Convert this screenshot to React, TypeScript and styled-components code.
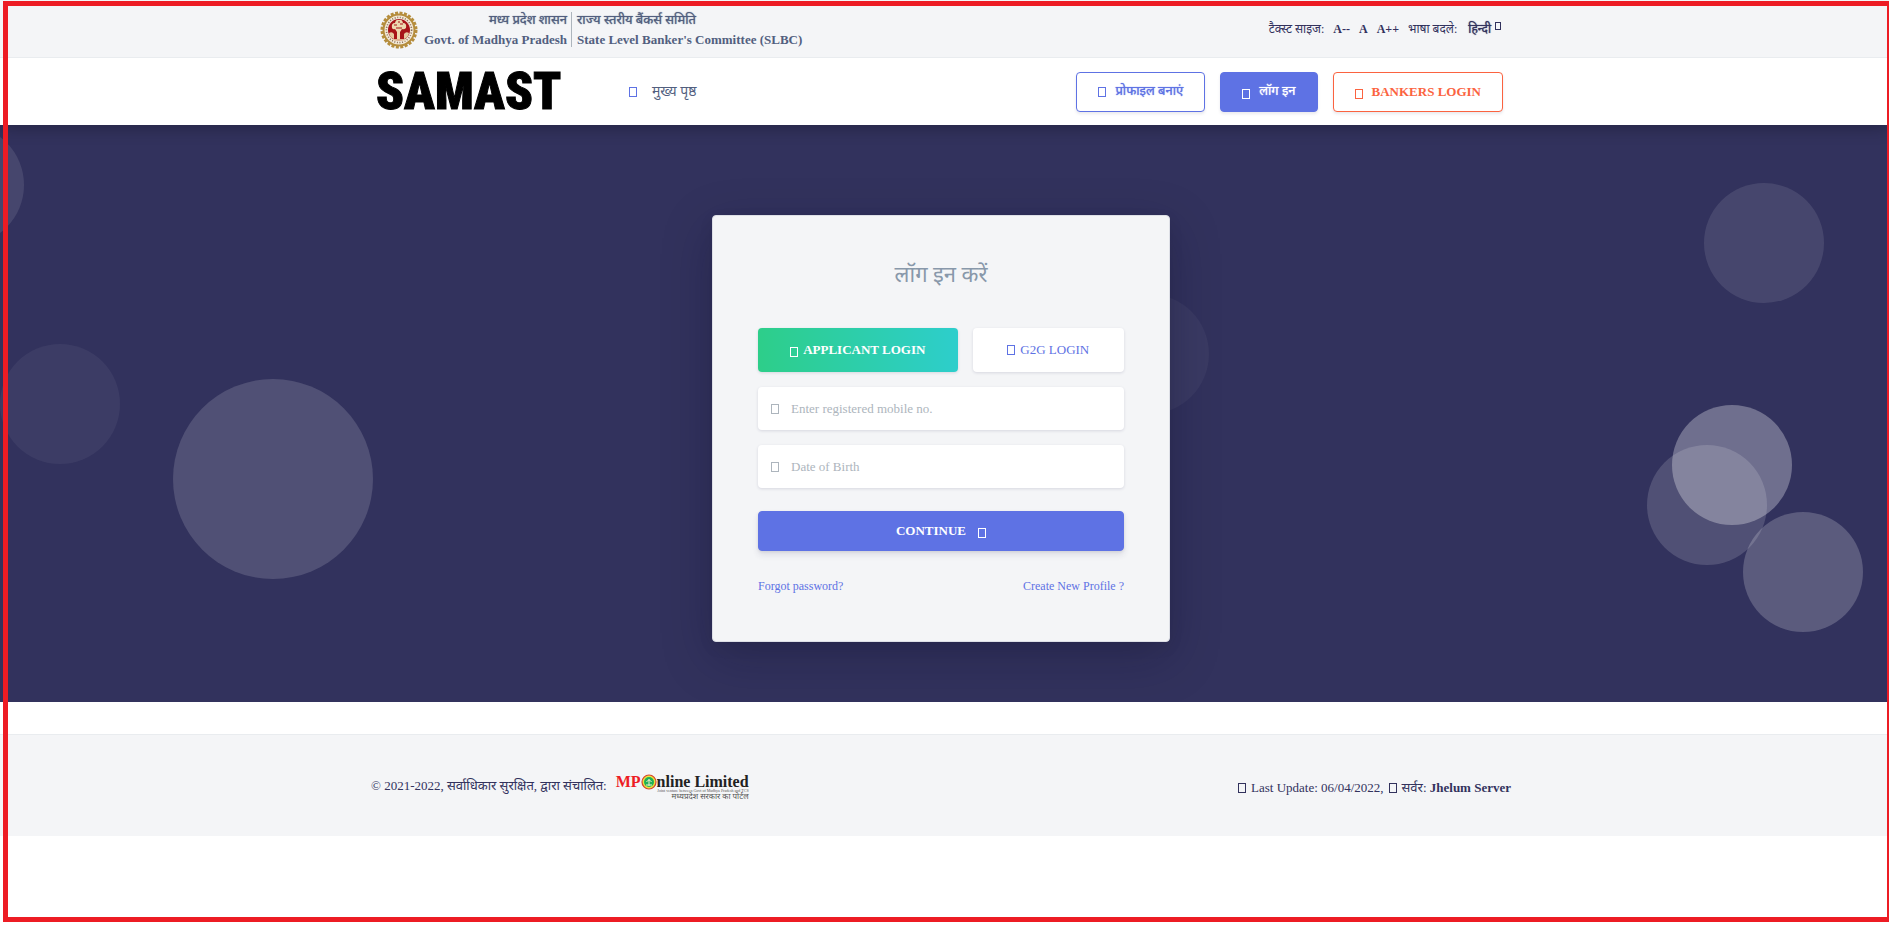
import React from "react";
import styled, { createGlobalStyle } from "styled-components";

const INDIGO = "#5e72e4";
const ORANGE = "#fb6340";
const NAVY = "#32325d";
const SLATE = "#525f7f";

const GlobalStyle = createGlobalStyle`
  * { box-sizing: border-box; }
  body {
    margin: 0;
    background: #fff;
    color: ${NAVY};
    font-family: "Liberation Serif", "Noto Sans Devanagari", "Noto Sans", serif;
    font-size: 13px;
    line-height: 20px;
    overflow-x: hidden;
  }
  button, input { font-family: inherit; }
  a { text-decoration: none; color: inherit; }
`;

const Frame = styled.div`
  position: fixed;
  inset: 1px -3px 3px 3px;
  border: 5px solid #ed1c24;
  pointer-events: none;
  z-index: 10;
`;

const Container = styled.div`
  display: flex;
  align-items: center;
  justify-content: space-between;
  width: 100%;
  max-width: 1140px;
  margin: 0 auto;
`;

const TopBar = styled.div`
  position: relative;
  z-index: 3;
  display: flex;
  height: 58px;
  padding-right: 7px;
  background: #f4f5f7;
  border-bottom: 1px solid #e9ecef;
`;

const Brand = styled.div`
  display: flex;
  align-items: center;
  padding: 2px 0 0 9px;
`;

const Office = styled.div<{ $first?: boolean }>`
  display: flex;
  flex-direction: column;
  font-size: 13px;
  font-weight: 700;
  line-height: 20px;
  color: ${SLATE};
  white-space: nowrap;
  text-align: ${(p) => (p.$first ? "right" : "left")};
  padding: ${(p) => (p.$first ? "0 4px 0 6px" : "0 0 0 5px")};
`;

/* Devanagari text emboldened by a soft halo instead of the wider bold face */
const Hindi = styled.span`
  font-weight: 400;
  text-shadow: 0 0 1px currentColor;
`;

const Divider = styled.span`
  width: 1px;
  height: 35px;
  background: #adb5bd;
`;

const Tools = styled.div`
  display: flex;
  align-items: center;
  gap: 9px;
  padding-right: 10px;
  font-size: 12px;
  white-space: nowrap;
`;

const ToolButton = styled.button`
  padding: 0;
  border: 0;
  background: none;
  color: ${NAVY};
  font-size: 12px;
  font-weight: 700;
  line-height: 20px;
  cursor: pointer;
`;

const Glyph = styled.span<{ $small?: boolean; $low?: boolean }>`
  display: inline-block;
  flex: none;
  width: ${(p) => (p.$small ? 6 : 8)}px;
  height: ${(p) => (p.$small ? 8 : 10)}px;
  margin-top: ${(p) => (p.$low ? 4 : 0)}px;
  border: 1px solid currentColor;
`;

const Language = styled(ToolButton)`
  display: flex;
  gap: 4px;
  padding-left: 2px;

  ${Glyph} { margin-top: 3px; }
`;

const Header = styled.header`
  position: relative;
  z-index: 2;
  display: flex;
  height: 67px;
  padding-right: 7px;
  background: #fff;
  box-shadow: 0 2px 16px rgba(0, 0, 0, 0.3);
`;

const Nav = styled.nav`
  display: flex;
  align-items: center;
  gap: 67px;
  padding-left: 5px;
`;

const Logo = styled.a`
  width: 186px;
  color: #000;
  font-family: "Roboto Condensed", Roboto, sans-serif;
  font-size: 51px;
  font-weight: 900;
  line-height: 56px;
  -webkit-text-stroke: 1px #000;
`;

const NavLink = styled.a`
  display: flex;
  align-items: center;
  gap: 15px;
  font-size: 14px;
  color: ${SLATE};

  ${Glyph} { color: ${INDIGO}; }
`;

const Actions = styled.div`
  display: flex;
  gap: 15px;
  padding-right: 8px;
`;

const Button = styled.button<{ $tone?: string; $filled?: boolean; $wide?: boolean }>`
  display: flex;
  align-items: center;
  justify-content: center;
  gap: ${(p) => (p.$wide ? 12 : 9)}px;
  height: 40px;
  width: ${(p) => (p.$wide ? "100%" : "auto")};
  padding: 0 21px;
  border: 1px solid ${(p) => p.$tone || INDIGO};
  border-radius: 4px;
  background: ${(p) => (p.$filled ? INDIGO : "#fff")};
  color: ${(p) => (p.$filled ? "#fff" : p.$tone || INDIGO)};
  box-shadow: ${(p) =>
    p.$wide
      ? "0 4px 6px rgba(50, 50, 93, 0.11), 0 1px 3px rgba(0, 0, 0, 0.08)"
      : "0 2px 3px rgba(50, 50, 93, 0.1)"};
  font-size: 13px;
  font-weight: 700;
  white-space: nowrap;
  cursor: pointer;
`;

const Hero = styled.main`
  position: relative;
  display: flex;
  justify-content: center;
  padding: 90px 7px 60px 0;
  background: #32325d;
  overflow: hidden;
`;

const Bubble = styled.span<{ $x: string; $y: string; $alpha: number; $size?: number; $left?: boolean }>`
  position: absolute;
  ${(p) => (p.$left ? "left" : "right")}: ${(p) => p.$x};
  top: ${(p) => p.$y};
  width: ${(p) => p.$size || 120}px;
  height: ${(p) => p.$size || 120}px;
  border-radius: 50%;
  background: rgba(255, 255, 255, ${(p) => p.$alpha});
`;

const Card = styled.form`
  position: relative;
  display: flex;
  flex-direction: column;
  width: 458px;
  padding: 41px 45px 45px;
  border: 1px solid #dddfe6;
  border-radius: 4px;
  background: #f4f5f7;
  box-shadow: 0 15px 50px rgba(10, 10, 40, 0.25), 0 5px 15px rgba(0, 0, 0, 0.07);
`;

const Title = styled.h1`
  margin: 0 0 35px;
  color: #8898aa;
  font-size: 22px;
  font-weight: 400;
  line-height: 36px;
  text-align: center;
`;

const Tabs = styled.div`
  display: flex;
  gap: 15px;
  margin-bottom: 15px;
`;

const Tab = styled.button<{ $active?: boolean }>`
  display: flex;
  align-items: center;
  justify-content: center;
  gap: 5px;
  flex: ${(p) => (p.$active ? "199 1 0" : "151 1 0")};
  height: 44px;
  padding: 0;
  border: 0;
  border-radius: 4px;
  background: ${(p) => (p.$active ? "linear-gradient(87deg, #2dce89, #2dcecc)" : "#fff")};
  color: ${(p) => (p.$active ? "#fff" : INDIGO)};
  box-shadow: 0 1px 3px rgba(50, 50, 93, 0.15);
  font-size: 13px;
  font-weight: ${(p) => (p.$active ? 700 : 400)};
  cursor: pointer;
`;

const Field = styled.label`
  display: flex;
  align-items: center;
  gap: 12px;
  height: 43px;
  margin-bottom: 15px;
  padding: 0 13px;
  border-radius: 4px;
  background: #fff;
  color: #adb5bd;
  box-shadow: 0 1px 3px rgba(50, 50, 93, 0.15);
`;

const Input = styled.input`
  flex: 1;
  min-width: 0;
  padding: 0;
  border: 0;
  outline: 0;
  background: none;
  color: #8898aa;
  font-size: 13px;
  line-height: 20px;

  &::placeholder { color: #adb5bd; opacity: 1; }
`;

const Submit = styled.div`
  padding: 8px 0 25px;
`;

const Links = styled.div`
  display: flex;
  justify-content: space-between;
  color: ${INDIGO};
  font-size: 12px;
  line-height: 20px;
`;

const Footer = styled.footer`
  display: flex;
  margin-top: 32px;
  padding: 34px 7px 34px 0;
  background: #f4f5f7;
  border-top: 1px solid #e9ecef;
`;

const Copyright = styled.div`
  display: flex;
  align-items: center;
  gap: 9px;
`;

const Partner = styled.a`
  display: flex;
  flex-direction: column;
  align-items: flex-end;
  padding-top: 5px;
  color: #222;
`;

const PartnerName = styled.span`
  display: flex;
  align-items: center;
  font-size: 16px;
  font-weight: 700;
  line-height: 16px;
`;

const Red = styled.span`
  color: #ed1c24;
`;

const PartnerNote = styled.span<{ $tiny?: boolean }>`
  font-size: ${(p) => (p.$tiny ? 4 : 8)}px;
  line-height: ${(p) => (p.$tiny ? 2 : 10)}px;
  color: #555;
`;

const Status = styled.div`
  display: flex;
  align-items: center;
  gap: 5px;
  padding-top: 4px;
`;

const Emblem = () => (
  <svg width="38" height="38" viewBox="0 0 38 38" role="img" aria-label="Madhya Pradesh emblem">
    <circle cx="19" cy="19" r="17" fill="none" stroke="#b58d3d" strokeWidth="3" strokeDasharray="3 1.45" />
    <circle cx="19" cy="19" r="15.5" fill="#f3ead9" stroke="#b58d3d" strokeWidth="2" />
    <circle cx="19" cy="19" r="12.6" fill="none" stroke="#8d6f58" strokeWidth="1.6" strokeDasharray="1 1.6" />
    <circle cx="19" cy="19" r="11" fill="#a71318" />
    <path d="M12 17q-1-5 3-5 1-4 4-3 3-1 4 3 4 0 3 5-2 2-4 1l-2 3v7h-3v-7l-2-3q-2 1-3-1z" fill="#ecd9b0" />
    <path d="M9 22q3-2 5 1v5q-4-1-5-6zM29 22q-3-2-5 1v5q4-1 5-6z" fill="#e5c9a0" />
    <path d="M14 14h3M20 13h3M16 17h6M18 11h2" stroke="#a71318" />
    <path d="M13 29h12" stroke="#ecd9b0" strokeWidth="1.6" />
  </svg>
);

const Seal = () => (
  <svg width="16" height="16" viewBox="0 0 16 16" aria-hidden="true">
    <circle cx="8" cy="8" r="7" fill="#e9e23c" stroke="#d5442b" strokeWidth="1.2" />
    <circle cx="8" cy="8" r="5" fill="#1fb058" />
    <path d="M8 5v7M5.500 8q2.500-4 5 0M5 11h6" stroke="#f4f0c8" fill="none" />
  </svg>
);

const bubbles = [
  { x: "-96px", y: "0", alpha: 0.1, left: true },
  { x: "65px", y: "58px", alpha: 0.1 },
  { x: "97px", y: "280px", alpha: 0.3 },
  { x: "122px", y: "320px", alpha: 0.15 },
  { x: "0", y: "219px", alpha: 0.05, left: true },
  { x: "173px", y: "254px", alpha: 0.15, size: 200, left: true },
  { x: "36%", y: "169px", alpha: 0.04 },
  { x: "26px", y: "387px", alpha: 0.2 },
];

export default function App() {
  return (
    <>
      <GlobalStyle />
      <Frame />
      <TopBar>
        <Container>
          <Brand>
            <Emblem />
            <Office $first>
              <Hindi>मध्य प्रदेश शासन</Hindi>
              <span>Govt. of Madhya Pradesh</span>
            </Office>
            <Divider />
            <Office>
              <Hindi>राज्य स्तरीय बैंकर्स समिति</Hindi>
              <span>State Level Banker's Committee (SLBC)</span>
            </Office>
          </Brand>
          <Tools>
            <span>टैक्स्ट साइज:</span>
            <ToolButton type="button">A--</ToolButton>
            <ToolButton type="button">A</ToolButton>
            <ToolButton type="button">A++</ToolButton>
            <span>भाषा बदले:</span>
            <Language type="button">
              <Hindi>हिन्दी</Hindi>
              <Glyph $small />
            </Language>
          </Tools>
        </Container>
      </TopBar>

      <Header>
        <Container>
          <Nav>
            <Logo href="#">SAMAST</Logo>
            <NavLink href="#">
              <Glyph />
              मुख्य पृष्ठ
            </NavLink>
          </Nav>
          <Actions>
            <Button type="button">
              <Glyph />
              <Hindi>प्रोफाइल बनाएं</Hindi>
            </Button>
            <Button type="button" $filled>
              <Glyph $low />
              <Hindi>लॉग इन</Hindi>
            </Button>
            <Button type="button" $tone={ORANGE}>
              <Glyph $low />
              BANKERS LOGIN
            </Button>
          </Actions>
        </Container>
      </Header>

      <Hero>
        {bubbles.map((b) => (
          <Bubble key={b.x} $x={b.x} $y={b.y} $alpha={b.alpha} $size={b.size} $left={b.left} />
        ))}
        <Card onSubmit={(e) => e.preventDefault()}>
          <Title>लॉग इन करें</Title>
          <Tabs>
            <Tab type="button" $active>
              <Glyph $low />
              APPLICANT LOGIN
            </Tab>
            <Tab type="button">
              <Glyph />
              G2G LOGIN
            </Tab>
          </Tabs>
          <Field>
            <Glyph />
            <Input type="tel" aria-label="Mobile number" placeholder="Enter registered mobile no." />
          </Field>
          <Field>
            <Glyph />
            <Input type="text" aria-label="Date of Birth" placeholder="Date of Birth" />
          </Field>
          <Submit>
            <Button type="submit" $filled $wide>
              CONTINUE
              <Glyph $low />
            </Button>
          </Submit>
          <Links>
            <a href="#">Forgot password?</a>
            <a href="#">Create New Profile ?</a>
          </Links>
        </Card>
      </Hero>

      <Footer>
        <Container>
          <Copyright>
            <span>© 2021-2022, सर्वाधिकार सुरक्षित, द्वारा संचालित:</span>
            <Partner href="#">
              <PartnerName>
                <Red>MP</Red>
                <Seal />
                nline Limited
              </PartnerName>
              <PartnerNote $tiny>Joint venture between Govt of Madhya Pradesh and TCS</PartnerNote>
              <PartnerNote>मध्यप्रदेश सरकार का पोर्टल</PartnerNote>
            </Partner>
          </Copyright>
          <Status>
            <Glyph />
            <span>Last Update: 06/04/2022,</span>
            <Glyph />
            <span>
              सर्वर: <strong>Jhelum Server</strong>
            </span>
          </Status>
        </Container>
      </Footer>
    </>
  );
}
